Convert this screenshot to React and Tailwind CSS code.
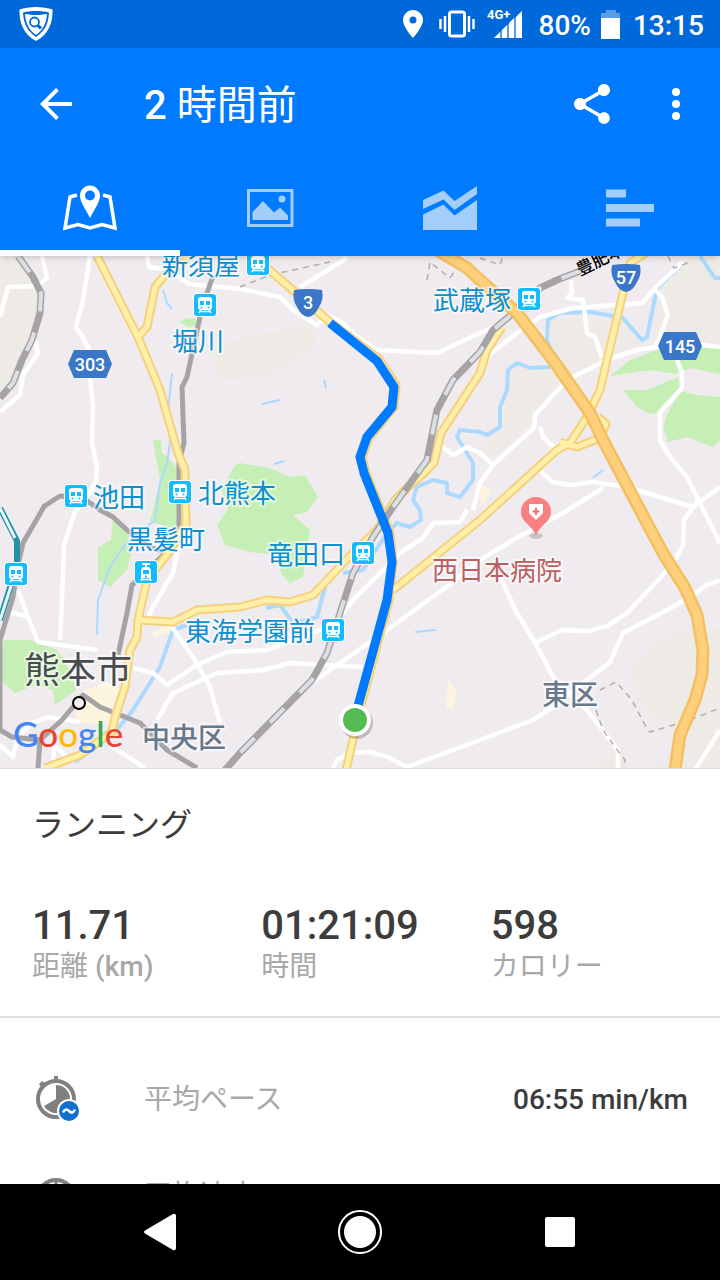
import { useState } from "react";

const stats = [
  { value: "11.71", label: "距離", unit: "(km)" },
  { value: "01:21:09", label: "時間" },
  { value: "598", label: "カロリー" },
];

/* ─── MAP DATA ────────────────────────────── */
const fields = [
  "0,250 16,256 40,290 38,320 20,370 0,400",
  "240,335 313,328 316,345 270,375 240,378",
  "550,318 623,320 645,342 600,362 550,390 534,420 490,462 480,450 500,430 508,372 550,362",
  "650,300 690,256 720,256 720,347 656,345",
  "630,672 672,632 720,628 720,768 655,768 690,730 650,715",
  "590,768 627,745 627,768",
  "205,345 240,340 240,380 222,380",
];

const parks = [
  "153,440 161,440 162,452 172,462 179,470 179,530 150,522 160,480",
  "113,518 127,528 132,550 127,570 110,587 98,580 98,547 111,540",
  "240,463 270,468 290,477 305,475 318,497 307,512 293,515 310,530 307,547 303,577 290,583 282,575 275,555 250,552 225,545 217,525 228,510 222,490 235,465",
  "3,640 30,640 57,650 70,670 76,690 55,705 53,690 35,685 15,693 0,680",
  "610,376 630,360 657,350 720,346 720,374 690,368 675,374 650,370",
  "623,390 647,390 678,377 681,388 660,412 650,414 637,407",
  "667,415 680,391 697,395 720,397 720,440 713,447 687,437 668,442 663,427",
  "179,322 187,318 196,319 196,326 188,327",
];

const blocks = [
  "448,680 457,690 453,709 446,709",
  "85,690 108,682 120,688 112,725 75,722 78,700",
  "480,485 491,490 484,505 480,500",
  "152,632 170,625 172,631 154,637",
];

const rivers = [
  "683,263 657,288 647,337 642,340 623,318 590,312 560,313 548,320 547,340 552,353",
  "550,367 530,368 517,363 508,370 507,390 500,407 500,427 487,435 480,432 460,430 457,437 473,463 473,480 460,497 447,493 447,483 433,480 417,487 413,500 420,510 421,520 410,527 397,523 387,533 363,570 343,573",
  "325,587 317,617 300,622",
  "187,625 173,630 160,667 133,710 117,730 75,762",
  "700,256 715,278 720,278",
  "266,608 280,605 292,622",
];

const streams = [
  "172,373 168,410 173,423 167,463 160,483 155,520 125,545 110,567 98,600 97,635",
  "163,290 167,303 172,309",
  "262,404 280,400",
  "324,380 326,388",
  "274,464 284,461",
  "415,632 436,630",
  "593,478 603,470",
];

const streets = [
  "90,256 83,300 76,327 88,347 90,377 93,407 92,443 97,467 96,482 88,495 75,512 64,545 62,600 60,640",
  "0,317 8,287 37,286 47,278 42,256",
  "35,340 38,353 23,375 20,395 0,412",
  "147,256 149,267 165,269 190,284 240,289 280,297 293,310 317,325 328,315 343,323 355,335 377,350 437,353 480,333 494,327",
  "480,362 517,333 540,317 573,308 642,303 657,286 683,262",
  "571,280 572,293 567,298 583,300 587,333 595,337 602,358",
  "720,347 702,345 656,347 637,350 607,360 567,380 535,415 534,428 517,443 493,465 480,483 473,510",
  "655,290 662,297 668,315 660,337 656,345",
  "677,360 682,373 682,388 660,412 660,440 670,457 687,477 700,503 720,543",
  "540,427 543,437 557,450",
  "540,470 552,482 570,485 593,482 627,487 653,495 693,507 720,487",
  "603,488 563,513 513,540 480,560 453,582 387,630 313,682",
  "467,510 460,522 433,523 423,538 400,553 355,598 343,613 320,630 267,650 227,652 197,665 167,685 153,673 133,668",
  "363,667 290,663 263,670 217,673 173,693 157,720",
  "172,627 193,657 210,687 220,723",
  "178,550 173,573 153,607 148,618",
  "18,590 28,617 38,642 97,650",
  "10,613 27,616",
  "0,745 13,757 17,740 30,724 48,717 80,722",
  "53,768 54,745 70,760",
  "110,745 145,768",
  "720,580 707,585 693,595 667,610 623,633 610,662 587,680 553,707 533,720 480,740 407,767 388,757 370,752 350,753 337,760 333,768",
  "500,577 517,613 535,643 555,680 587,710 600,727 618,750 618,768",
  "535,643 562,630 588,631 607,626 627,613 663,575 675,560 683,545 684,520 700,497",
  "720,730 695,770",
  "440,445 453,455 467,447 480,453 493,465",
  "300,287 323,273 347,258",
];

const yellowRoads = [
  "97,256 138,337 160,390 178,453 185,470 186,525 167,555 147,580 138,620 137,637 130,650 125,687 115,717 112,732 80,755 45,768",
  "138,337 147,327 155,287 165,275 183,263 192,250",
  "252,256 267,268 330,322 379,359 396,385 394,407 369,438 362,457 366,473 390,533 393,562 389,600 361,706 346,770",
  "138,620 173,622 197,610 240,607 267,600 290,602 313,595 330,577 350,556 377,530 395,500 410,485 425,472 434,463 441,433 480,373 487,350 502,327",
  "393,590 480,520 557,450 570,443 587,417 600,390 607,360 623,293 630,263 650,250",
  "560,442 577,447 600,438 606,424 598,417",
];

const highway =
  "437,250 467,268 480,280 517,313 553,360 590,413 603,440 640,510 663,553 685,588 697,615 703,650 702,675 695,700 680,735 675,770";

const rails = [
  "213,276 207,293 200,317 187,377 182,387 184,443 179,463 179,540 158,560 132,585 127,613 118,655",
  "43,507 60,496 83,498 100,510 113,517 127,530 150,547 167,553",
  "45,505 23,543 17,570 13,597 0,640 0,730 12,737 40,740 62,720 83,695 100,707 140,723 167,750 197,768",
  "40,740 38,768",
];

const mainLines = [
  "18,256 33,277 41,293 40,313 32,340 22,360 13,383 0,398",
  "580,271 557,280 540,288 517,310 493,330 480,352 453,380 437,410 427,460 393,507 373,537 353,573 340,613 327,653 312,680 240,753 225,770",
];

const footpaths = [
  "600,690 616,682 632,700 645,725 650,732 690,720 720,708",
  "596,710 603,730 615,747 625,760 624,768",
  "427,280 430,262 450,278 457,268",
  "240,287 270,275 330,262",
  "480,258 500,265 503,256",
  "668,256 674,268 690,262",
];

const route =
  "330,323 377,361 394,387 392,407 367,437 360,457 364,473 388,533 392,562 387,600 358,706";

const stations = [
  { x: 258, y: 264 },
  { x: 205, y: 305 },
  { x: 529, y: 299 },
  { x: 76, y: 496 },
  { x: 180, y: 492 },
  { x: 363, y: 553 },
  { x: 333, y: 630 },
  { x: 16, y: 574 },
];

const stationNames = [
  { x: 162, y: 275, name: "新須屋" },
  { x: 172, y: 351, name: "堀川" },
  { x: 433, y: 310, name: "武蔵塚" },
  { x: 93, y: 507, name: "池田" },
  { x: 198, y: 503, name: "北熊本" },
  { x: 127, y: 549, name: "黒髪町" },
  { x: 267, y: 564, name: "竜田口" },
  { x: 185, y: 641, name: "東海学園前" },
];

function Lines({ items, color, width, dash }) {
  return (
    <g
      fill="none"
      stroke={color}
      strokeWidth={width}
      strokeDasharray={dash}
      strokeLinejoin="round"
    >
      {items.map((points) => (
        <polyline key={points} points={points} />
      ))}
    </g>
  );
}

function Areas({ items, color }) {
  return (
    <g fill={color}>
      {items.map((points) => (
        <polygon key={points} points={points} />
      ))}
    </g>
  );
}

function Station({ x, y }) {
  return (
    <g transform={`translate(${x} ${y})`}>
      <rect x="-12" y="-12" width="24" height="24" rx="4" fill="#fff" />
      <rect x="-11" y="-11" width="22" height="22" rx="3" fill="#12bcff" />
      <rect x="-7" y="-8" width="14" height="13" rx="3" fill="#fff" />
      <path d="M-5 -4h4v4h-4zM1 -4h4v4H1z" fill="#12bcff" />
      <circle cx="-3.5" cy="2.5" r="1" fill="#12bcff" />
      <circle cx="3.5" cy="2.5" r="1" fill="#12bcff" />
      <path d="M-4 5l-2 3M4 5l2 3M-4 6.5h8" stroke="#fff" strokeWidth="1.5" />
    </g>
  );
}

function HexShield({ x, y, label }) {
  return (
    <g transform={`translate(${x} ${y})`}>
      <path d="M-22 0l6-14h32l6 14-6 14h-32z" fill="#3a77c8" />
      <ShieldText label={label} y={7} />
    </g>
  );
}

function RouteShield({ x, y, label }) {
  return (
    <g transform={`translate(${x} ${y})`}>
      <path
        d="M-14 -13q14 -2 28 0q2 10 -3 17q-4 9 -11 10q-7 -1 -11 -10q-5 -7 -3 -17z"
        fill="#3a77c8"
      />
      <ShieldText label={label} y={6} />
    </g>
  );
}

function ShieldText({ label, y }) {
  return (
    <text y={y} textAnchor="middle" fill="#fff" className="text-[18px] font-medium">
      {label}
    </text>
  );
}

function RouteMap() {
  return (
    <svg
      className="block w-full h-[512px] bg-[#efebef] font-['Roboto','Noto_Sans_CJK_JP',sans-serif]"
      viewBox="0 256 720 512"
      preserveAspectRatio="xMidYMid slice"
      role="img"
      aria-label="Route map"
    >
      <Areas items={fields} color="#eeebe6" />
      <Areas items={parks} color="#c6efb5" />
      <Areas items={blocks} color="#fdf5df" />
      <Lines items={rivers} color="#acdaff" width="4" />
      <Lines items={streams} color="#acdaff" width="2" />
      <Lines items={streets} color="#fff" width="4.5" />
      <Lines items={rails} color="#a5a3a6" width="5" />
      <Lines items={footpaths} color="#b0aeb0" width="1.5" dash="6 5" />

      {/* private railway on the west edge */}
      <Lines items={["0,508 17,541 17,565 0,620"]} color="#1f93a5" width="6" />
      <Lines items={["0,508 15,538", "13,580 0,620"]} color="#eef6f7" width="3" />

      <Lines items={yellowRoads} color="#f6d17c" width="9" />
      <Lines items={yellowRoads} color="#ffefa8" width="5" />
      <Lines items={mainLines} color="#a5a3a6" width="7" />
      <Lines items={mainLines} color="#dce0e2" width="4" dash="20 22" />
      <Lines items={[highway]} color="#f4bf62" width="13" />
      <Lines items={[highway]} color="#ffd07c" width="8" />

      <text
        x="580"
        y="276"
        transform="rotate(-26 580 276)"
        className="text-[17px] font-medium"
        fill="#000"
      >
        豊肥本線
      </text>

      {/* names */}
      <g stroke="#fff" strokeOpacity="0.6" strokeWidth="4" strokeLinejoin="round" style={{ paintOrder: "stroke" }}>
        <g fill="#0a8fd0" className="text-[26px]">
          {stationNames.map((s) => (
            <text key={s.name} x={s.x} y={s.y}>
              {s.name}
            </text>
          ))}
        </g>
        <text x="432" y="580" fill="#b9605f" className="text-[26px]">
          西日本病院
        </text>
        <text x="24" y="683" fill="#484c4f" className="text-[36px]">
          熊本市
        </text>
        <g fill="#68788a" className="text-[28px] font-medium">
          <text x="142" y="748">中央区</text>
          <text x="542" y="705">東区</text>
        </g>
      </g>

      {stations.map((s) => (
        <Station key={`${s.x}-${s.y}`} x={s.x} y={s.y} />
      ))}

      {/* tram stop */}
      <g transform="translate(146 572)">
        <rect x="-12" y="-12" width="24" height="24" rx="4" fill="#fff" />
        <rect x="-11" y="-11" width="22" height="22" rx="3" fill="#12bcff" />
        <path d="M-4 -8h8M0 -8v4" stroke="#fff" strokeWidth="2" />
        <path d="M-3 -5h6l2 3v8h-10v-8z" fill="#fff" />
        <path d="M-3 -2h6v4h-6zM-1 3.500h2v2h-2z" fill="#12bcff" />
        <path d="M-4 6l-1 3M4 6l1 3M-4 7.500h8" stroke="#fff" strokeWidth="1.5" />
      </g>

      <HexShield x={90} y={364} label="303" />
      <HexShield x={680} y={346} label="145" />
      <RouteShield x={308} y={303} label="3" />
      <RouteShield x={626} y={278} label="57" />

      {/* hospital */}
      <ellipse cx="536" cy="536" rx="7" ry="3" fill="#c9c6c9" />
      <path
        d="M536 497c-8.500 0-15 6.500-15 15 0 11 12 13 15 24 3-11 15-13 15-24 0-8.500-6.500-15-15-15z"
        fill="#f88083"
      />
      <path d="M529 504h14v9l-7 7-7-7z" fill="#fff" />
      <path d="M536 508v7M532.500 511.500h7" stroke="#f26b6f" strokeWidth="2" />

      <circle cx="79" cy="703" r="6" fill="#eee" stroke="#000" strokeWidth="2" />

      {/* recorded track */}
      <polyline points={route} fill="none" stroke="#007aff" strokeWidth="9" strokeLinejoin="round" />
      <circle cx="357" cy="723" r="16" fill="#000" opacity="0.2" />
      <circle cx="355" cy="720" r="16" fill="#fff" />
      <circle cx="355" cy="720" r="12" fill="#56bb55" />

      <text x="13" y="747" className="text-[35px] font-medium font-['Lato',sans-serif]">
        <tspan fill="#4285f4">G</tspan>
        <tspan fill="#ea4335">o</tspan>
        <tspan fill="#fbbc05">o</tspan>
        <tspan fill="#4285f4">g</tspan>
        <tspan fill="#34a853">l</tspan>
        <tspan fill="#ea4335">e</tspan>
      </text>
    </svg>
  );
}

/* ─── ICONS ───────────────────────────────── */
function ShieldIcon() {
  return (
    <svg width="36" height="36" viewBox="0 0 36 36" fill="none">
      <path d="M18 1C12 1 6 2 1.500 3.500C1 16 5 28 18 35C31 28 35 16 34.500 3.500C30 2 24 1 18 1z" fill="#fff" />
      <path d="M18 5C13 5 9 5.500 5 6.500C5.500 17 9 25 18 31C27 25 30.500 17 31 6.500C27 5.500 23 5 18 5z" fill="#0069d9" />
      <path d="M18 9C14 9 11 8.500 7 8C7.500 17 11 24 18 29C25 24 28.500 17 29 8C25 8.500 22 9 18 9z" fill="#fff" />
      <circle cx="16.500" cy="16" r="4.500" stroke="#0069d9" strokeWidth="1.800" />
      <path d="M19.500 19l3.500 3.500" stroke="#0069d9" strokeWidth="3" />
    </svg>
  );
}

function StatusIcons() {
  return (
    <>
      <svg width="20" height="28" viewBox="0 0 20 28" fill="#fff" fillRule="evenodd">
        <path d="M10 0C4.500 0 0 4.500 0 10c0 7 10 18 10 18s10-11 10-18C20 4.500 15.500 0 10 0zm0 6.500a3.500 3.500 0 1 1 0 7 3.500 3.500 0 0 1 0-7z" />
      </svg>
      <svg className="ml-4" width="36" height="28" viewBox="0 0 36 28" fill="none" stroke="#fff" strokeWidth="2.500">
        <rect x="10.500" y="2" width="15" height="24" rx="2" strokeWidth="3" />
        <path d="M1.500 9v10M6 6v16M30 6v16M34.500 9v10" />
      </svg>
      <svg className="ml-3" width="36" height="32" viewBox="0 0 36 32" fill="#fff">
        <path d="M7 30L35 3v27z" opacity="0.35" />
        <path d="M7 30l6-6v6zM15 22l5-5v13h-5zM22 15l5-5v20h-5zM29 9l6-6v27h-6z" />
        <text x="0" y="11" className="text-[13px] font-bold">4G+</text>
      </svg>
    </>
  );
}

function MapIcon() {
  return (
    <svg width="60" height="48" viewBox="0 0 60 48" fill="none">
      <path
        d="M17 11L10 13 5 44 18 40.500 30 44 42 40.500 55 44 50 13 43 11"
        stroke="#fff"
        strokeWidth="3.500"
      />
      <path
        d="M30 1.500c-5.500 0-10 4.500-10 10 0 7 6 14 10 22.500 4-8.500 10-15.500 10-22.500 0-5.500-4.500-10-10-10zm0 5a5 5 0 1 1 0 10 5 5 0 0 1 0-10z"
        fill="#fff"
        fillRule="evenodd"
      />
    </svg>
  );
}

function PhotoIcon() {
  return (
    <svg width="60" height="48" viewBox="0 0 60 48" fill="#a3cefa">
      <rect x="8.500" y="6.500" width="43.500" height="35" fill="none" stroke="#a3cefa" strokeWidth="3" />
      <path d="M12.500 28L23 17l11 11.500 6-5 8 8V36H12.500z" />
      <circle cx="42" cy="15" r="3.500" />
    </svg>
  );
}

function ChartIcon() {
  return (
    <svg width="60" height="48" viewBox="0 0 60 48" fill="#a3cefa">
      <path d="M3 16L23.500 6.500 34.500 17 57 2v8L34.500 26 23.500 15.500 3 25z" />
      <path d="M3 30.500L23.500 20.500 34.500 31.500 57 16v30H3z" />
    </svg>
  );
}

function SplitsIcon() {
  return (
    <svg width="60" height="48" viewBox="0 0 60 48" fill="#a3cefa">
      <path d="M6 5.500h20v8H6zM6 20h48v8H6zM6 34.500h34v8H6z" />
    </svg>
  );
}

function PaceIcon() {
  return (
    <svg width="48" height="48" viewBox="0 0 48 48" fill="none">
      <circle cx="24" cy="25" r="18" stroke="#808080" strokeWidth="4" />
      <path d="M22 2h4v4h-4zM7 10l3-3 4 3-4 4z" fill="#808080" />
      <path d="M24 25V11a14 14 0 1 1-12 21z" fill="#808080" />
      <circle cx="37" cy="37" r="12" fill="#fff" />
      <circle cx="37" cy="37" r="10" fill="#1170cf" />
      <path d="M31 38.500c2-4 4-3.500 6-1.500s4 2.500 6-1.500" stroke="#fff" strokeWidth="2.500" />
    </svg>
  );
}

function SpeedIcon() {
  return (
    <svg width="48" height="48" viewBox="0 0 48 48" fill="none" stroke="#808080">
      <circle cx="24" cy="28" r="18" strokeWidth="4" />
      <path d="M24 10v8M24 28l8-8" strokeWidth="3" />
    </svg>
  );
}

const tabs = [
  { id: "map", label: "Map", Icon: MapIcon },
  { id: "photos", label: "Photos", Icon: PhotoIcon },
  { id: "charts", label: "Charts", Icon: ChartIcon },
  { id: "splits", label: "Splits", Icon: SplitsIcon },
];

const details = [
  { label: "平均ペース", value: "06:55 min/km", Icon: PaceIcon },
  { label: "平均速度", Icon: SpeedIcon },
];

export default function App() {
  const [tab, setTab] = useState("map");

  return (
    <div className="flex flex-col h-screen overflow-hidden bg-white text-[#3c3c3c] font-['Roboto','Noto_Sans_CJK_JP',sans-serif]">
      <header className="relative z-10 shrink-0 bg-[#007aff] text-white shadow-md">
        {/* Status bar */}
        <div className="flex items-center justify-between h-12 pl-[18px] pr-4 bg-[#0069d9]">
          <ShieldIcon />
          <div className="flex items-center text-[28px] leading-8 font-medium">
            <StatusIcons />
            <span className="ml-4 pt-1">80%</span>
            <svg className="ml-2.5" width="20" height="30" viewBox="0 0 20 30" fill="#fff">
              <path d="M5 1h10v3h4v5H0V4h5z" opacity="0.35" />
              <path d="M0 9h19v21H0z" />
            </svg>
            <span className="ml-3 pt-1">13:15</span>
          </div>
        </div>

        {/* App bar */}
        <div className="flex items-center h-28 pl-8 pr-5">
          <button aria-label="Back">
            <svg width="48" height="48" viewBox="0 0 24 24" fill="#fff">
              <path d="M20 11H7.830l5.590-5.590L12 4l-8 8 8 8 1.410-1.410L7.830 13H20z" />
            </svg>
          </button>
          <h1 className="flex-1 ml-16 pt-1 text-[40px] leading-[48px]">
            <span className="font-medium">2</span> 時間前
          </h1>
          <button aria-label="Share">
            <svg width="48" height="48" viewBox="0 0 24 24" fill="#fff">
              <path d="M18 16.080c-.76 0-1.440.3-1.960.77L8.910 12.700c.05-.23.09-.46.09-.7s-.04-.47-.09-.7l7.050-4.110c.54.5 1.250.81 2.040.81 1.660 0 3-1.340 3-3s-1.340-3-3-3-3 1.340-3 3c0 .24.04.47.09.7L8.040 9.810C7.500 9.310 6.790 9 6 9c-1.660 0-3 1.340-3 3s1.340 3 3 3c.79 0 1.500-.31 2.040-.81l7.120 4.160c-.05.21-.08.43-.08.65 0 1.610 1.310 2.920 2.920 2.920s2.920-1.310 2.920-2.920-1.310-2.920-2.920-2.920z" />
            </svg>
          </button>
          <button className="ml-9" aria-label="More">
            <svg width="48" height="48" viewBox="0 0 24 24" fill="#fff">
              <circle cx="12" cy="6" r="2" />
              <circle cx="12" cy="12" r="2" />
              <circle cx="12" cy="18" r="2" />
            </svg>
          </button>
        </div>

        {/* Tabs */}
        <nav className="grid grid-cols-4 h-24">
          {tabs.map(({ id, label, Icon }) => (
            <button
              key={id}
              aria-label={label}
              onClick={() => setTab(id)}
              className={
                tab === id
                  ? "flex items-center justify-center border-y-6 border-t-transparent border-b-white"
                  : "flex items-center justify-center border-y-6 border-transparent"
              }
            >
              <Icon />
            </button>
          ))}
        </nav>
      </header>

      <main className="flex-1 min-h-0 overflow-hidden">
        <RouteMap />

        {/* Summary */}
        <section className="pl-8 pt-8 pb-8 border-t border-b-2 border-t-[#dcdcdc] border-b-[#e0e0e0]">
          <h2 className="text-[32px] leading-[48px]">ランニング</h2>
          <dl className="grid grid-cols-3 mt-[53px]">
            {stats.map((s) => (
              <div key={s.label} className="flex flex-col-reverse">
                <dt className="text-[28px] leading-[34px] text-[#a8a8a8]">
                  {s.label}
                  {s.unit && <span className="font-medium"> {s.unit}</span>}
                </dt>
                <dd className="text-[40px] leading-[48px] font-medium">{s.value}</dd>
              </div>
            ))}
          </dl>
        </section>

        {/* Details */}
        <ul className="px-8 pt-8 text-[28px] leading-8">
          {details.map(({ label, value, Icon }) => (
            <li key={label} className="flex items-center h-24">
              <Icon />
              <span className="flex-1 ml-16 pt-1 text-[#a8a8a8]">{label}</span>
              {value && <span className="pt-1 font-medium">{value}</span>}
            </li>
          ))}
        </ul>
      </main>

      {/* ─── SYSTEM NAV ──────────────────────────── */}
      <footer className="relative shrink-0 grid grid-cols-3 items-center justify-items-center h-24 px-[60px] bg-black">
        <button aria-label="System back">
          <svg width="32" height="38" viewBox="0 0 32 38" fill="#fff">
            <path d="M1 17.500L29 1q3-1 3 2v32q0 3-3 2L1 20.500q-2-1.500 0-3z" />
          </svg>
        </button>
        <button aria-label="Home">
          <svg width="44" height="44" viewBox="0 0 44 44" fill="#fff">
            <circle cx="22" cy="22" r="21" fill="none" stroke="#fff" strokeWidth="2" />
            <circle cx="22" cy="22" r="16" />
          </svg>
        </button>
        <button aria-label="Recent apps" className="w-[30px] h-[30px] rounded-xs bg-white" />
      </footer>
    </div>
  );
}
